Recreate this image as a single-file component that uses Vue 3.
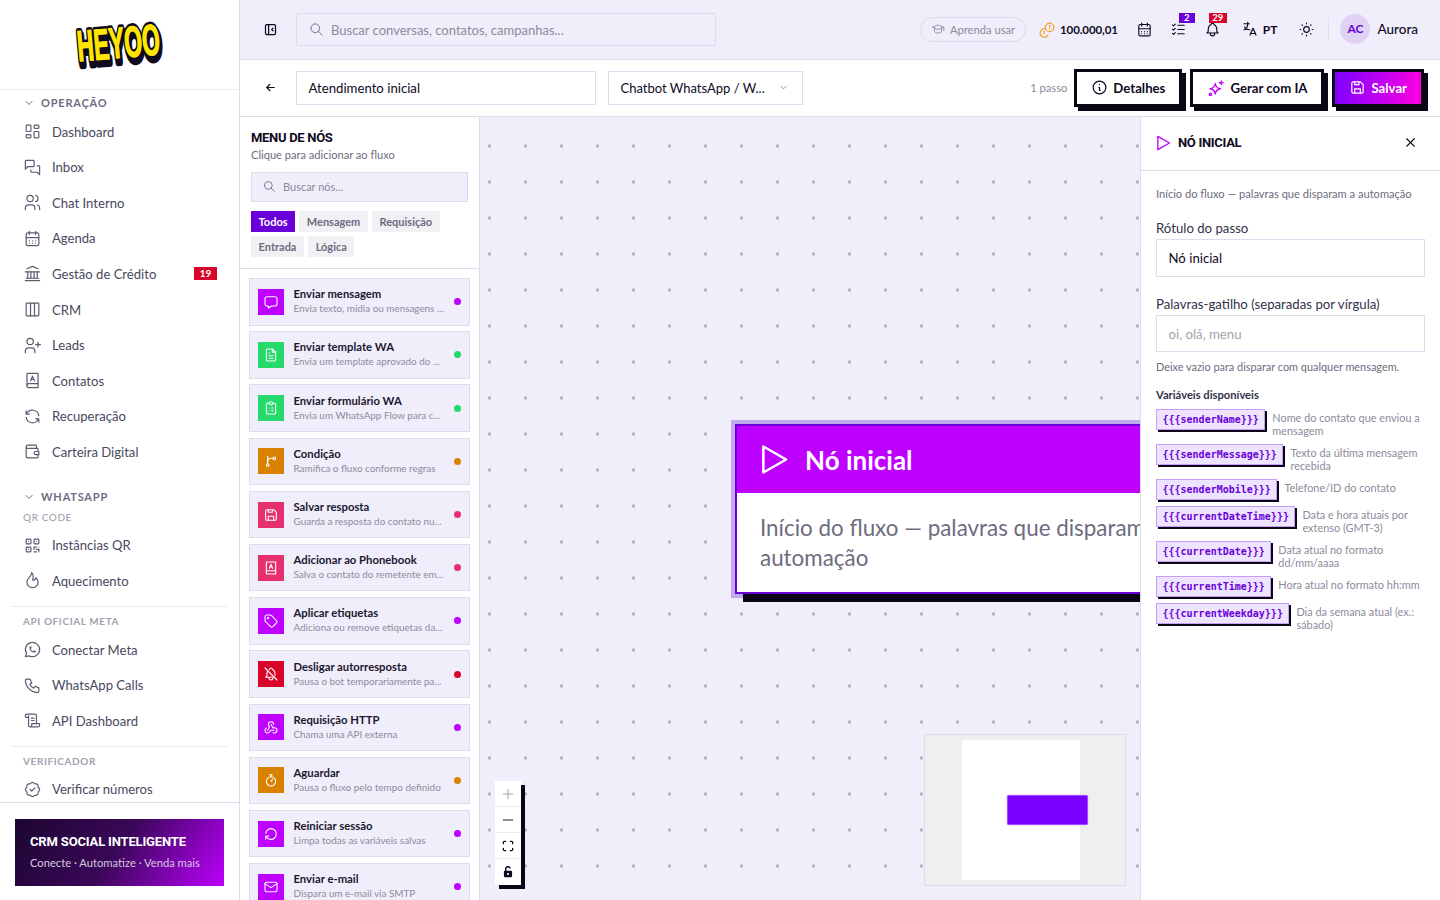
<script setup>
import { h } from 'vue'

const paths = {
  dashboard: ['M5 4h4a1 1 0 0 1 1 1v6a1 1 0 0 1-1 1H5a1 1 0 0 1-1-1V5a1 1 0 0 1 1-1', 'M5 16h4a1 1 0 0 1 1 1v2a1 1 0 0 1-1 1H5a1 1 0 0 1-1-1v-2a1 1 0 0 1 1-1', 'M15 12h4a1 1 0 0 1 1 1v6a1 1 0 0 1-1 1h-4a1 1 0 0 1-1-1v-6a1 1 0 0 1 1-1', 'M15 4h4a1 1 0 0 1 1 1v2a1 1 0 0 1-1 1h-4a1 1 0 0 1-1-1V5a1 1 0 0 1 1-1'],
  inbox: ['M3 14V4a1 1 0 0 1 1-1h9a1 1 0 0 1 1 1v6a1 1 0 0 1-1 1H6z', 'M10 15v2a1 1 0 0 0 1 1h7l3 3V11a1 1 0 0 0-1-1h-2'],
  users: ['M5 7a4 4 0 1 0 8 0a4 4 0 1 0-8 0', 'M3 21v-2a4 4 0 0 1 4-4h4a4 4 0 0 1 4 4v2', 'M16 3.13a4 4 0 0 1 0 7.75', 'M21 21v-2a4 4 0 0 0-3-3.85'],
  calendar: ['M4 7a2 2 0 0 1 2-2h12a2 2 0 0 1 2 2v12a2 2 0 0 1-2 2H6a2 2 0 0 1-2-2z', 'M16 3v4', 'M8 3v4', 'M4 11h16', 'M8 15h.01M12 15h.01M16 15h.01M8 18h.01M12 18h.01M16 18h.01'],
  bank: ['M3 21h18', 'M3 10h18', 'M5 6l7-3 7 3', 'M6 10v8', 'M10 10v8', 'M14 10v8', 'M18 10v8', 'M4 18h16'],
  columns: ['M4 5a1 1 0 0 1 1-1h14a1 1 0 0 1 1 1v14a1 1 0 0 1-1 1H5a1 1 0 0 1-1-1z', 'M9.5 4v16', 'M14.5 4v16'],
  userPlus: ['M5 7a4 4 0 1 0 8 0a4 4 0 1 0-8 0', 'M3 21v-2a4 4 0 0 1 4-4h4a4 4 0 0 1 4 4v2', 'M19 8v6', 'M16 11h6'],
  book: ['M5 4a1 1 0 0 1 1-1h13v18H7a2 2 0 0 1-2-2z', 'M5 18a2 2 0 0 1 2-2h12', 'M9.5 12.5l2.5-6 2.5 6', 'M10.5 10.5h3'],
  refresh: ['M20 11A8.1 8.1 0 0 0 4.5 9M4 5v4h4', 'M4 13a8.1 8.1 0 0 0 15.5 2m.5 4v-4h-4'],
  wallet: ['M17 8V5a1 1 0 0 0-1-1H6a2 2 0 0 0 0 4h12a1 1 0 0 1 1 1v3m0 4v3a1 1 0 0 1-1 1H6a2 2 0 0 1-2-2V6', 'M20 12v4h-4a2 2 0 0 1 0-4h4'],
  qr: ['M4 5a1 1 0 0 1 1-1h4a1 1 0 0 1 1 1v4a1 1 0 0 1-1 1H5a1 1 0 0 1-1-1z', 'M7 17v.01', 'M14 5a1 1 0 0 1 1-1h4a1 1 0 0 1 1 1v4a1 1 0 0 1-1 1h-4a1 1 0 0 1-1-1z', 'M7 7v.01', 'M4 15a1 1 0 0 1 1-1h4a1 1 0 0 1 1 1v4a1 1 0 0 1-1 1H5a1 1 0 0 1-1-1z', 'M17 7v.01', 'M14 14h3', 'M20 14v.01', 'M14 14v3', 'M14 20h3', 'M17 17h3', 'M20 17v3'],
  flame: ['M12 10.941c2.333-3.308.167-7.823-1-8.941c0 3.395-2.235 5.299-3.667 6.706c-1.43 1.408-2.333 3.621-2.333 5.588c0 3.704 3.134 6.706 7 6.706s7-3.002 7-6.706c0-1.712-1.232-4.403-2.333-5.588c-2.084 3.353-3.257 3.353-4.667 2.235'],
  whatsapp: ['M3 21l1.65-3.8a9 9 0 1 1 3.4 2.9L3 21', 'M9 10a.5.5 0 0 0 1 0V9a.5.5 0 0 0-1 0v1a5 5 0 0 0 5 5h1a.5.5 0 0 0 0-1h-1a.5.5 0 0 0 0 1'],
  phone: ['M5 4h4l2 5-2.5 1.5a11 11 0 0 0 5 5l1.5-2.5 5 2v4a2 2 0 0 1-2 2A16 16 0 0 1 3 6a2 2 0 0 1 2-2'],
  script: ['M3 6a2 2 0 0 1 2-2h10a2 2 0 0 1 2 2v10', 'M3 6v1a1 1 0 0 0 1 1h3', 'M7 6v12a2 2 0 0 0 2 2h10a2 2 0 0 0 2-2v-1a1 1 0 0 0-1-1H11v2a2 2 0 0 1-2 2', 'M10.5 9H14', 'M10.5 12H14'],
  rosette: ['M5 7.2a2.2 2.2 0 0 1 2.2-2.2h1a2.2 2.2 0 0 0 1.55-.64l.7-.7a2.2 2.2 0 0 1 3.12 0l.7.7c.412.41.97.64 1.55.64h1a2.2 2.2 0 0 1 2.2 2.2v1c0 .58.23 1.138.64 1.55l.7.7a2.2 2.2 0 0 1 0 3.12l-.7.7a2.2 2.2 0 0 0-.64 1.55v1a2.2 2.2 0 0 1-2.2 2.2h-1a2.2 2.2 0 0 0-1.55.64l-.7.7a2.2 2.2 0 0 1-3.12 0l-.7-.7a2.2 2.2 0 0 0-1.55-.64h-1a2.2 2.2 0 0 1-2.2-2.2v-1a2.2 2.2 0 0 0-.64-1.55l-.7-.7a2.2 2.2 0 0 1 0-3.12l.7-.7A2.2 2.2 0 0 0 5 8.2z', 'M9 12l2 2 4-4'],
  chevron: ['M6 9l6 6 6-6'],
  search: ['M3 10a7 7 0 1 0 14 0a7 7 0 1 0-14 0', 'M21 21l-6-6'],
  collapse: ['M4 6a2 2 0 0 1 2-2h12a2 2 0 0 1 2 2v12a2 2 0 0 1-2 2H6a2 2 0 0 1-2-2z', 'M9 4v16', 'M16 10l-2 2 2 2'],
  school: ['M22 9L12 5 2 9l10 4 10-4v6', 'M6 10.6V16a6 3 0 0 0 12 0v-5.4'],
  coins: ['M9 9a6 6 0 1 0 12 0a6 6 0 1 0-12 0', 'M15 6v3.5', 'M15 12v.01', 'M8.5 11a6 6 0 1 0 4.5 8.8', 'M7 14.5v3.5'],
  checklist: ['M3.5 5.5L5 7l2.5-2.5', 'M3.5 11.5L5 13l2.5-2.5', 'M3.5 17.5L5 19l2.5-2.5', 'M11 6h9', 'M11 12h9', 'M11 18h9'],
  bell: ['M10 5a2 2 0 1 1 4 0a7 7 0 0 1 4 6v3a4 4 0 0 0 2 3H4a4 4 0 0 0 2-3v-3a7 7 0 0 1 4-6', 'M9 17v1a3 3 0 0 0 6 0v-1'],
  language: ['M4 5h7', 'M9 3v2c0 4.418-2.239 8-5 8', 'M5 9c0 2.144 2.952 3.908 6.7 4', 'M12 20l4-9 4 9', 'M19.1 18h-6.2'],
  sun: ['M8 12a4 4 0 1 0 8 0a4 4 0 1 0-8 0', 'M3 12h1m8-9v1m8 8h1m-9 8v1M5.6 5.6l.7.7m12.1-.7l-.7.7m0 11.4l.7.7m-12.1-.7l-.7.7'],
  back: ['M5 12h14', 'M5 12l6 6', 'M5 12l6-6'],
  info: ['M3 12a9 9 0 1 0 18 0a9 9 0 1 0-18 0', 'M12 8h.01', 'M11 12h1v4h1'],
  sparkles: ['M11 6c.8 4.500 2.700 6.400 7 7-4.300.7-6.200 2.500-7 7-.7-4.500-2.600-6.300-7-7 4.400-.6 6.300-2.500 7-7z', 'M19 2.500v5', 'M16.500 5h5', 'M3 20.500a1.500 1.500 0 1 0 3 0a1.500 1.500 0 1 0-3 0'],
  floppy: ['M6 4h10l4 4v10a2 2 0 0 1-2 2H6a2 2 0 0 1-2-2V6a2 2 0 0 1 2-2', 'M8 20v-6h8v6', 'M8 4v4h6V4'],
  message: ['M18 4a3 3 0 0 1 3 3v8a3 3 0 0 1-3 3h-5l-5 3v-3H6a3 3 0 0 1-3-3V7a3 3 0 0 1 3-3z'],
  file: ['M14 3v4a1 1 0 0 0 1 1h4', 'M17 21H7a2 2 0 0 1-2-2V5a2 2 0 0 1 2-2h7l5 5v11a2 2 0 0 1-2 2z', 'M9 9h1', 'M9 13h6', 'M9 17h6'],
  clipboard: ['M9 5H7a2 2 0 0 0-2 2v12a2 2 0 0 0 2 2h10a2 2 0 0 0 2-2V7a2 2 0 0 0-2-2h-2', 'M9 5a2 2 0 0 1 2-2h2a2 2 0 0 1 2 2a2 2 0 0 1-2 2h-2a2 2 0 0 1-2-2', 'M9 12h.01', 'M13 12h2', 'M9 16h.01', 'M13 16h2'],
  branch: ['M5 18a2 2 0 1 0 4 0a2 2 0 1 0-4 0', 'M15 8a2 2 0 1 0 4 0a2 2 0 1 0-4 0', 'M7 16V5', 'M7 14a5 5 0 0 1 5-6h3'],
  tag: ['M6.500 7.500a1 1 0 1 0 2 0a1 1 0 1 0-2 0', 'M3 6v5.172a2 2 0 0 0 .586 1.414l7.71 7.71a2.41 2.41 0 0 0 3.408 0l5.592-5.592a2.41 2.41 0 0 0 0-3.408l-7.71-7.71A2 2 0 0 0 11.172 3H6a3 3 0 0 0-3 3'],
  bellOff: ['M9.346 5.353c.21-.129.428-.246.654-.353a2 2 0 1 1 4 0a7 7 0 0 1 4 6v3m-1 3H4a4 4 0 0 0 2-3v-3a6.996 6.996 0 0 1 1.273-3.707', 'M9 17v1a3 3 0 0 0 5.913.71', 'M3 3l18 18'],
  webhook: ['M4.876 13.61A4 4 0 1 0 11 17h5.500', 'M15.066 20.502a4 4 0 1 0 1.934-7.502c-.706 0-1.424.179-2 .5l-3-5.500', 'M16 8a4 4 0 1 0-8 0c0 1.506.77 2.818 2 3.500l-3 5.500'],
  timer: ['M5 14a7 7 0 1 0 14 0a7 7 0 1 0-14 0', 'M12 14l2.500-3', 'M10 4h4', 'M12 4v3'],
  rotate: ['M4.050 11a8 8 0 1 1 .5 4m-.5 5v-5h5'],
  mail: ['M3 7a2 2 0 0 1 2-2h14a2 2 0 0 1 2 2v10a2 2 0 0 1-2 2H5a2 2 0 0 1-2-2z', 'M3 7l9 6 9-6'],
  play: ['M7 4v16l14-8z'],
  close: ['M18 6L6 18', 'M6 6l12 12'],
  plus: ['M12 5v14', 'M5 12h14'],
  minus: ['M5 12h14'],
  expand: ['M4 8V6a2 2 0 0 1 2-2h2', 'M4 16v2a2 2 0 0 0 2 2h2', 'M16 4h2a2 2 0 0 1 2 2v2', 'M16 20h2a2 2 0 0 0 2-2v-2']
}

// small functional icon so the template stays readable
const Icon = (props) =>
  h(
    'svg',
    {
      width: props.size || 18,
      height: props.size || 18,
      viewBox: '0 0 24 24',
      fill: 'none',
      stroke: 'currentColor',
      'stroke-width': props.sw || 1.7,
      'stroke-linecap': 'round',
      'stroke-linejoin': 'round'
    },
    paths[props.name].map((d) => h('path', { d }))
  )
Icon.props = ['name', 'size', 'sw']

const navGroups = [
  {
    head: 'OPERAÇÃO',
    items: [
      { icon: 'dashboard', label: 'Dashboard' },
      { icon: 'inbox', label: 'Inbox' },
      { icon: 'users', label: 'Chat Interno' },
      { icon: 'calendar', label: 'Agenda' },
      { icon: 'bank', label: 'Gestão de Crédito', badge: 19 },
      { icon: 'columns', label: 'CRM' },
      { icon: 'userPlus', label: 'Leads' },
      { icon: 'book', label: 'Contatos' },
      { icon: 'refresh', label: 'Recuperação' },
      { icon: 'wallet', label: 'Carteira Digital' }
    ]
  },
  {
    head: 'WHATSAPP',
    sub: 'QR CODE',
    items: [
      { icon: 'qr', label: 'Instâncias QR' },
      { icon: 'flame', label: 'Aquecimento' }
    ]
  },
  {
    sub: 'API OFICIAL META',
    divider: true,
    items: [
      { icon: 'whatsapp', label: 'Conectar Meta' },
      { icon: 'phone', label: 'WhatsApp Calls' },
      { icon: 'script', label: 'API Dashboard' }
    ]
  },
  {
    sub: 'VERIFICADOR',
    divider: true,
    items: [{ icon: 'rosette', label: 'Verificar números' }]
  }
]

const filters = [
  { label: 'Todos', active: true },
  { label: 'Mensagem' },
  { label: 'Requisição' },
  { label: 'Entrada' },
  { label: 'Lógica' }
]

const magenta = '#bd00ff'
const green = '#25d96b'
const orange = '#d98200'
const pink = '#e6306e'
const red = '#d90429'

const nodes = [
  { icon: 'message', color: magenta, title: 'Enviar mensagem', text: 'Envia texto, mídia ou mensagens ...' },
  { icon: 'file', color: green, title: 'Enviar template WA', text: 'Envia um template aprovado do ...' },
  { icon: 'clipboard', color: green, title: 'Enviar formulário WA', text: 'Envia um WhatsApp Flow para c...' },
  { icon: 'branch', color: orange, title: 'Condição', text: 'Ramifica o fluxo conforme regras' },
  { icon: 'floppy', color: pink, title: 'Salvar resposta', text: 'Guarda a resposta do contato nu...' },
  { icon: 'book', color: pink, title: 'Adicionar ao Phonebook', text: 'Salva o contato do remetente em...' },
  { icon: 'tag', color: magenta, title: 'Aplicar etiquetas', text: 'Adiciona ou remove etiquetas da...' },
  { icon: 'bellOff', color: red, title: 'Desligar autorresposta', text: 'Pausa o bot temporariamente pa...' },
  { icon: 'webhook', color: magenta, title: 'Requisição HTTP', text: 'Chama uma API externa' },
  { icon: 'timer', color: orange, title: 'Aguardar', text: 'Pausa o fluxo pelo tempo definido' },
  { icon: 'rotate', color: magenta, title: 'Reiniciar sessão', text: 'Limpa todas as variáveis salvas' },
  { icon: 'mail', color: magenta, title: 'Enviar e-mail', text: 'Dispara um e-mail via SMTP' }
]

const variables = [
  { name: '{{{senderName}}}', text: 'Nome do contato que enviou a mensagem' },
  { name: '{{{senderMessage}}}', text: 'Texto da última mensagem recebida' },
  { name: '{{{senderMobile}}}', text: 'Telefone/ID do contato' },
  { name: '{{{currentDateTime}}}', text: 'Data e hora atuais por extenso (GMT-3)' },
  { name: '{{{currentDate}}}', text: 'Data atual no formato dd/mm/aaaa' },
  { name: '{{{currentTime}}}', text: 'Hora atual no formato hh:mm' },
  { name: '{{{currentWeekday}}}', text: 'Dia da semana atual (ex.: sábado)' }
]
</script>

<template>
  <div class="app">
    <aside class="sidebar">
      <div class="logo">
        <svg width="200" height="60" viewBox="0 0 200 60">
          <g transform="rotate(-5 100 28) translate(58 0) scale(0.522 1)" font-family="Liberation Sans, sans-serif" font-weight="700" font-size="44">
            <text x="2" y="47" fill="#0f0a1e" stroke="#0f0a1e" stroke-width="8" stroke-linejoin="round">HEYOO</text>
            <text x="0" y="43" fill="#ffe600" stroke="#0f0a1e" stroke-width="6" stroke-linejoin="round" paint-order="stroke">HEYOO</text>
            <text x="0" y="43" fill="#ffe600" stroke="#ffe600" stroke-width="0.900">HEYOO</text>
          </g>
        </svg>
      </div>
      <nav class="nav">
        <section v-for="group in navGroups" :key="group.head || group.sub" class="nav-group" :class="{ divided: group.divider }">
          <div v-if="group.head" class="nav-head">
            <Icon name="chevron" :size="12" :sw="2" />
            <span>{{ group.head }}</span>
          </div>
          <div v-if="group.sub" class="nav-sub">{{ group.sub }}</div>
          <a v-for="item in group.items" :key="item.label" class="nav-item">
            <Icon :name="item.icon" :size="19" :sw="1.5" class="nav-icon" />
            <span class="nav-label">{{ item.label }}</span>
            <span v-if="item.badge" class="nav-badge">{{ item.badge }}</span>
          </a>
        </section>
      </nav>
      <div class="side-foot">
        <div class="promo">
          <strong>CRM SOCIAL INTELIGENTE</strong>
          <span>Conecte · Automatize · Venda mais</span>
        </div>
      </div>
    </aside>

    <main class="main">
      <header class="topbar">
        <button class="collapse-btn"><Icon name="collapse" :size="17" :sw="2" /></button>
        <div class="global-search">
          <Icon name="search" :size="15" :sw="1.5" />
          <span>Buscar conversas, contatos, campanhas...</span>
        </div>
        <div class="top-right">
          <div class="learn"><Icon name="school" :size="14" :sw="1.5" /><span>Aprenda usar</span></div>
          <div class="credits"><Icon name="coins" :size="17" :sw="1.7" class="coin" /><span>100.000,01</span></div>
          <div class="tool"><Icon name="calendar" :size="17" :sw="1.6" /></div>
          <div class="tool"><Icon name="checklist" :size="17" :sw="1.6" /><span class="count purple">2</span></div>
          <div class="tool"><Icon name="bell" :size="17" :sw="1.6" /><span class="count crimson">29</span></div>
          <div class="lang"><Icon name="language" :size="18" :sw="1.6" /><span>PT</span></div>
          <div class="tool sun"><Icon name="sun" :size="17" :sw="1.6" /></div>
          <div class="user">
            <span class="avatar">AC</span>
            <span class="user-name">Aurora</span>
          </div>
        </div>
      </header>

      <div class="editor-bar">
        <button class="back"><Icon name="back" :size="15" :sw="2" /></button>
        <div class="field name-field">Atendimento inicial</div>
        <div class="field type-field">
          <span>Chatbot WhatsApp / W...</span>
          <Icon name="chevron" :size="11" :sw="1.6" class="type-chev" />
        </div>
        <div class="editor-actions">
          <span class="steps">1 passo</span>
          <button class="brutal"><Icon name="info" :size="17" :sw="1.7" />Detalhes</button>
          <button class="brutal"><Icon name="sparkles" :size="18" :sw="1.7" class="spark" />Gerar com IA</button>
          <button class="brutal save"><Icon name="floppy" :size="17" :sw="1.7" />Salvar</button>
        </div>
      </div>

      <div class="workspace">
        <aside class="palette">
          <div class="palette-top">
            <h2>MENU DE NÓS</h2>
            <p>Clique para adicionar ao fluxo</p>
            <div class="node-search">
              <Icon name="search" :size="13" :sw="1.6" />
              <span>Buscar nós...</span>
            </div>
            <div class="filters">
              <span v-for="f in filters" :key="f.label" class="filter" :class="{ active: f.active }">{{ f.label }}</span>
            </div>
          </div>
          <div class="node-list">
            <div v-for="node in nodes" :key="node.title" class="node-card">
              <span class="node-icon" :style="{ background: node.color }"><Icon :name="node.icon" :size="16" :sw="1.6" /></span>
              <div class="node-copy">
                <strong>{{ node.title }}</strong>
                <span>{{ node.text }}</span>
              </div>
              <i class="node-dot" :style="{ background: node.color }"></i>
            </div>
          </div>
        </aside>

        <section class="canvas">
          <div class="flow-node">
            <div class="flow-head">
              <Icon name="play" :size="39" :sw="1.55" />
              <span>Nó inicial</span>
            </div>
            <div class="flow-body">Início do fluxo — palavras que disparam a automação</div>
          </div>

          <div class="zoom-tools">
            <button class="muted"><Icon name="plus" :size="16" :sw="1.4" /></button>
            <button><Icon name="minus" :size="16" :sw="1.4" /></button>
            <button><Icon name="expand" :size="14" :sw="2.2" /></button>
            <button class="lock">
              <svg width="14" height="14" viewBox="0 0 24 24">
                <path d="M8 11V7a4 4 0 0 1 7.500-2" fill="none" stroke="currentColor" stroke-width="2.500" stroke-linecap="round" />
                <path d="M7 10h10a2 2 0 0 1 2 2v7a2 2 0 0 1-2 2H7a2 2 0 0 1-2-2v-7a2 2 0 0 1 2-2z" fill="currentColor" />
                <circle cx="12" cy="15.500" r="1.800" fill="#fff" />
              </svg>
            </button>
          </div>

          <svg class="minimap" width="202" height="152" viewBox="0 0 202 152">
            <rect x="0.500" y="0.500" width="201" height="151" fill="#efefef" stroke="#dedcec" />
            <rect x="38" y="6" width="118" height="140" fill="#fff" />
            <rect x="83" y="61" width="81" height="30" rx="1" fill="#7a00ff" stroke="#d9c2ff" stroke-width="0.800" />
          </svg>
        </section>

        <aside class="inspector">
          <div class="inspector-head">
            <Icon name="play" :size="20" :sw="1.6" class="head-play" />
            <h2>NÓ INICIAL</h2>
            <button class="close"><Icon name="close" :size="15" :sw="1.8" /></button>
          </div>
          <div class="inspector-body">
            <p class="hint first">Início do fluxo — palavras que disparam a automação</p>
            <label class="form-label">Rótulo do passo</label>
            <div class="form-input step-input">Nó inicial</div>
            <label class="form-label second">Palavras-gatilho (separadas por vírgula)</label>
            <div class="form-input empty">oi, olá, menu</div>
            <p class="hint below">Deixe vazio para disparar com qualquer mensagem.</p>
            <h3>Variáveis disponíveis</h3>
            <div class="var-list">
              <div v-for="v in variables" :key="v.name" class="var-row">
                <code>{{ v.name }}</code>
                <span>{{ v.text }}</span>
              </div>
            </div>
          </div>
        </aside>
      </div>
    </main>
  </div>
</template>

<style>
html,
body {
  margin: 0;
  background: #fff;
}
</style>

<style scoped>
* {
  box-sizing: border-box;
}

button {
  font: inherit;
  background: none;
  border: 0;
  padding: 0;
  color: inherit;
}

.app {
  display: flex;
  width: 1440px;
  height: 900px;
  overflow: hidden;
  font-family: Lato, "Liberation Sans", sans-serif;
  color: #0f0a1e;
  background: #fff;
}

/* sidebar */
.sidebar {
  width: 240px;
  flex: none;
  display: flex;
  flex-direction: column;
  border-right: 1px solid #dedcec;
}

.logo {
  height: 90px;
  flex: none;
  display: flex;
  align-items: center;
  justify-content: center;
  padding-right: 1px;
  border-bottom: 1px solid #ecebf3;
}

.nav {
  flex: 1;
  overflow: hidden;
  padding-top: 2.800px;
}

.nav-group + .nav-group {
  margin-top: 17px;
}

.nav-group.divided {
  margin: 7.200px 11px 0;
  border-top: 1px solid #ecebf3;
}

.nav-head {
  height: 20px;
  margin-bottom: 1px;
  padding-left: 23px;
  display: flex;
  align-items: center;
  gap: 6px;
  font-size: 11px;
  font-weight: 700;
  letter-spacing: 0.8px;
  color: #6e6c80;
}

.nav-sub {
  height: 19.600px;
  padding-left: 23px;
  font-size: 10px;
  line-height: 18px;
  letter-spacing: 0.6px;
  color: #a3a2af;
  font-weight: 500;
}

.divided .nav-sub {
  height: 25px;
  padding: 5px 0 0 12px;
  font-weight: 700;
}

.nav-item {
  height: 35.600px;
  display: flex;
  align-items: center;
  padding: 0 22px 0 23px;
  font-size: 13.100px;
  color: #4a4860;
}

.divided .nav-item {
  padding: 0 12px;
}

.nav-icon {
  flex: none;
  margin-right: 10px;
  color: #5d5b70;
}

.nav-label {
  flex: 1;
}

.nav-badge {
  width: 23px;
  height: 13px;
  background: #d90429;
  color: #fff;
  font-size: 10px;
  font-weight: 700;
  line-height: 13px;
  text-align: center;
}

.side-foot {
  height: 98px;
  flex: none;
  padding: 16px 15px;
  border-top: 1px solid #dedcec;
}

.promo {
  height: 67px;
  width: 209px;
  padding: 15px 15px 0;
  display: flex;
  flex-direction: column;
  gap: 7px;
  background: linear-gradient(125deg, #1c0630 0%, #3a0758 48%, #bd00ff 100%);
  color: #fff;
}

.promo strong {
  font-family: Roboto, sans-serif;
  font-size: 13px;
  letter-spacing: -0.16px;
}

.promo span {
  font-size: 11.200px;
  color: #d5c8e0;
}

/* main column */
.main {
  flex: 1;
  min-width: 0;
  display: flex;
  flex-direction: column;
}

.topbar {
  height: 60px;
  flex: none;
  display: flex;
  align-items: center;
  padding: 0 22px 1px 23px;
  background: #f0eefa;
  border-bottom: 1px solid #dedcec;
}

.collapse-btn {
  width: 15px;
  display: flex;
  justify-content: center;
}

.global-search {
  width: 420px;
  height: 33px;
  margin-left: 18px;
  display: flex;
  align-items: center;
  gap: 7px;
  padding: 1px 12px 0;
  border: 1px solid #dedcec;
  color: #6e6c80;
  font-size: 13px;
}

.global-search span {
  color: #8d8b9c;
}

.top-right {
  margin-left: auto;
  display: flex;
  align-items: center;
}

.learn {
  width: 106px;
  height: 25px;
  display: flex;
  align-items: center;
  justify-content: center;
  gap: 5px;
  border: 1px solid #dedcec;
  border-radius: 13px;
  color: #8d8b9c;
  font-size: 11.200px;
}

.credits {
  margin-left: 13px;
  display: flex;
  align-items: center;
  gap: 4px;
  font-size: 11.500px;
  font-weight: 700;
  letter-spacing: -0.1px;
}

.coin {
  color: #f5a11c;
}

.tool {
  position: relative;
  display: flex;
  width: 17px;
  margin-left: 17px;
}

.credits + .tool {
  margin-left: 18px;
}

.count {
  position: absolute;
  top: -8px;
  height: 10px;
  color: #fff;
  font-size: 9.500px;
  font-weight: 700;
  line-height: 10px;
  text-align: center;
}

.count.purple {
  left: 9px;
  width: 16px;
  background: #6a00d9;
}

.count.crimson {
  left: 5px;
  width: 18px;
  background: #d90429;
}

.lang {
  margin-left: 20px;
  display: flex;
  align-items: center;
  gap: 4px;
  font-size: 12px;
  font-weight: 700;
}

.sun {
  margin-left: 21px;
}

.user {
  margin-left: 13px;
  padding-left: 11px;
  display: flex;
  align-items: center;
  gap: 7px;
  border-left: 1px solid #e2e0ee;
  height: 24px;
}

.avatar {
  width: 30px;
  height: 30px;
  flex: none;
  border-radius: 50%;
  background: #e0d2f5;
  color: #6a00d9;
  font-size: 12px;
  font-weight: 700;
  line-height: 30px;
  text-align: center;
}

.user-name {
  font-size: 13.500px;
  font-weight: 500;
}

.editor-bar {
  height: 57px;
  flex: none;
  display: flex;
  align-items: center;
  padding: 0 16px 1px 24px;
  border-bottom: 1px solid #dedcec;
}

.back {
  width: 13px;
  display: flex;
  justify-content: center;
}

.field {
  height: 34px;
  display: flex;
  align-items: center;
  padding: 0 11.500px;
  border: 1px solid #dedcec;
  font-size: 13.200px;
}

.name-field {
  width: 300px;
  margin-left: 19px;
}

.type-field {
  width: 195px;
  margin-left: 12px;
  justify-content: space-between;
  padding-right: 13px;
  font-size: 13px;
}

.type-chev {
  color: #6e6c80;
}

.editor-actions {
  margin-left: auto;
  display: flex;
  align-items: center;
}

.steps {
  margin-right: 7px;
  font-size: 11.200px;
  color: #8d8b9c;
}

.brutal {
  height: 38px;
  margin-left: 8px;
  padding: 0 14px;
  display: flex;
  align-items: center;
  gap: 5px;
  border: 3px solid #0a0614;
  box-shadow: 4px 4px 0 #0a0614;
  background: #fff;
  font-size: 13.200px;
  font-weight: 700;
  white-space: nowrap;
}

.steps + .brutal {
  margin-left: 0;
}

.spark {
  color: #bd00ff;
}

.save {
  background: linear-gradient(100deg, #7a00ff, #ff00e0);
  color: #fff;
}

.workspace {
  flex: 1;
  min-height: 0;
  display: flex;
}

/* node palette */
.palette {
  width: 240px;
  flex: none;
  display: flex;
  flex-direction: column;
  border-right: 1px solid #dedcec;
}

.palette-top {
  height: 152px;
  flex: none;
  padding: 13px 11px 0;
  border-bottom: 1px solid #dedcec;
}

.palette-top h2,
.inspector-head h2 {
  margin: 0;
  font-family: Roboto, sans-serif;
  font-size: 13px;
  font-weight: 700;
  letter-spacing: -0.3px;
  line-height: 15px;
}

.palette-top p {
  margin: 2px 0 0;
  font-size: 11.100px;
  line-height: 15px;
  color: #6e6c80;
}

.node-search {
  height: 30px;
  width: 217px;
  margin-top: 10px;
  padding: 0 11px 1px;
  display: flex;
  align-items: center;
  gap: 7px;
  background: #f0eefa;
  border: 1px solid #dedcec;
  color: #6e6c80;
  font-size: 11px;
}

.node-search span {
  color: #8d8b9c;
}

.filters {
  margin-top: 9px;
  display: flex;
  flex-wrap: wrap;
  gap: 3.500px 4px;
}

.filter {
  height: 21px;
  padding: 0 7.600px;
  background: #f0f0f5;
  color: #6e6c80;
  font-size: 11px;
  font-weight: 700;
  line-height: 21px;
}

.filter.active {
  background: #6a00d9;
  color: #fff;
}

.node-list {
  flex: 1;
  overflow: hidden;
  padding: 9px 9px 0;
}

.node-card {
  height: 47.500px;
  margin-bottom: 5.700px;
  width: 221px;
  padding: 0 8px;
  display: flex;
  align-items: center;
  background: #f0eefa;
  border: 1px solid #dedcec;
}

.node-icon {
  width: 26px;
  height: 26px;
  flex: none;
  display: flex;
  align-items: center;
  justify-content: center;
  color: #fff;
}

.node-copy {
  flex: 1;
  min-width: 0;
  margin-left: 9.500px;
  display: flex;
  flex-direction: column;
  gap: 1px;
  padding-bottom: 2px;
}

.node-copy strong {
  font-size: 11.300px;
  font-weight: 700;
  line-height: 15px;
  color: #1b1730;
}

.node-copy span {
  font-size: 9.900px;
  line-height: 13px;
  color: #8d8b9c;
  white-space: nowrap;
}

.node-dot {
  width: 7px;
  height: 7px;
  flex: none;
  margin-left: 4px;
  border-radius: 50%;
}

/* canvas */
.canvas {
  position: relative;
  flex: 1;
  min-width: 0;
  overflow: hidden;
  background-color: #f0eefa;
  background-image: radial-gradient(circle at 9.500px 29px, #b5b2c4 0, #b5b2c4 1.400px, transparent 2px);
  background-size: 36px 36px;
}

.flow-node {
  position: absolute;
  left: 255px;
  top: 307px;
  width: 520px;
  border: 2px solid #6a00d9;
  background: #fff;
  box-shadow: 8px 8px 0 #0a0614, 0 0 0 4px #c2a8ef;
}

.flow-head {
  height: 67px;
  padding-left: 15px;
  display: flex;
  align-items: center;
  gap: 14px;
  background: #bd00ff;
  color: #fff;
  font-size: 26px;
  font-weight: 700;
}

.flow-body {
  height: 99px;
  padding: 20px 23px 0;
  font-size: 22.400px;
  line-height: 30px;
  color: #6e6c80;
}

.zoom-tools {
  position: absolute;
  left: 15px;
  top: 664px;
  width: 26px;
  display: flex;
  flex-direction: column;
  background: #fff;
  box-shadow: 4px 4px 0 #0a0614;
}

.zoom-tools button {
  height: 26px;
  display: flex;
  align-items: center;
  justify-content: center;
  border-bottom: 1px solid #ecebf3;
}

.zoom-tools button:last-child {
  border-bottom: 0;
}

.zoom-tools .muted {
  color: #9d9bab;
}

.minimap {
  position: absolute;
  right: 14px;
  top: 617px;
}

/* inspector */
.inspector {
  width: 300px;
  flex: none;
  position: relative;
  background: #fff;
  border-left: 1px solid #dedcec;
}

.inspector-head {
  height: 54px;
  padding: 0 22px 2px 11px;
  display: flex;
  align-items: center;
  border-bottom: 1px solid #dedcec;
}

.head-play {
  color: #bd00ff;
}

.inspector-head h2 {
  margin-left: 6px;
}

.close {
  margin-left: auto;
  display: flex;
}

.inspector-body {
  padding: 15px 15px 0;
}

.hint {
  margin: 0;
  font-size: 11.100px;
  line-height: 15px;
  color: #6e6c80;
}

.form-label {
  display: block;
  font-size: 13.200px;
  line-height: 17px;
  color: #35324a;
}

.hint.first + .form-label {
  margin-top: 19px;
}

.form-label.second {
  margin-top: 19px;
}

.form-input {
  width: 269px;
  height: 38px;
  margin-top: 2px;
  padding: 0 11.500px;
  display: flex;
  align-items: center;
  border: 1px solid #dedcec;
  font-size: 13.200px;
}

.form-input.empty {
  height: 37px;
  color: #a3a2af;
}

.hint.below {
  margin-top: 7px;
  font-size: 10.900px;
}

.inspector-body h3 {
  margin: 14px 0 0;
  font-size: 11.200px;
  font-weight: 700;
  line-height: 14px;
  color: #35324a;
}

.var-list {
  margin-top: 7px;
  display: flex;
  flex-direction: column;
  gap: 6px;
}

.var-row {
  display: flex;
  align-items: flex-start;
  gap: 7px;
}

.var-row code {
  flex: none;
  height: 21px;
  padding: 0 5.500px;
  background: #efe4ff;
  border: 1px solid #c79dfa;
  box-shadow: 2px 2px 0 #0a0614;
  color: #6a00d9;
  font-family: "DejaVu Sans Mono", "Liberation Mono", monospace;
  font-size: 10px;
  font-weight: 700;
  line-height: 19px;
}

.var-row span {
  padding: 2px 0 1px;
  font-size: 10.900px;
  line-height: 13px;
  color: #8d8b9c;
}
</style>
